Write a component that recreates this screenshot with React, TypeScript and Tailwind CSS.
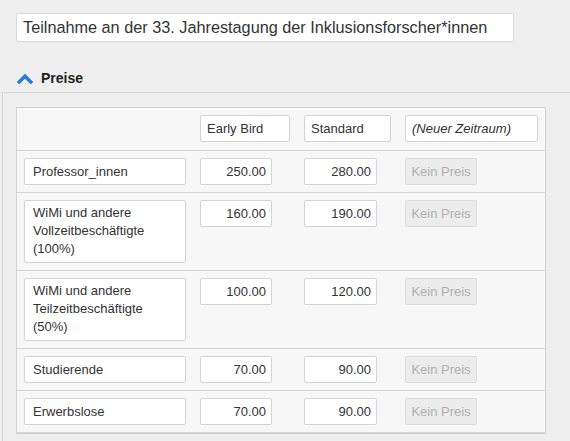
import React from "react";

const rows = [
  { name: ["Professor_innen"], eb: "250.00", st: "280.00" },
  { name: ["WiMi und andere", "Vollzeitbeschäftigte", "(100%)"], eb: "160.00", st: "190.00" },
  { name: ["WiMi und andere", "Teilzeitbeschäftigte", "(50%)"], eb: "100.00", st: "120.00" },
  { name: ["Studierende"], eb: "70.00", st: "90.00" },
  { name: ["Erwerbslose"], eb: "70.00", st: "90.00" },
];

function Box({ children, className = "" }: { children?: React.ReactNode; className?: string }) {
  return (
    <div className={`bg-white border border-[#d4d4d4] rounded-[2px] text-[13px] text-[#333] leading-[18px] ${className}`}>
      {children}
    </div>
  );
}

export default function App() {
  return (
    <div
      className="w-[570px] h-[441px] overflow-hidden bg-[#eeeeee]"
      style={{ fontFamily: '"Liberation Sans", Arial, sans-serif' }}
    >
      <div className="pt-[13px] pl-[16px]">
        <div className="w-[498px] h-[29px] bg-white border border-[#d8d8d8] rounded-[2px] flex items-center pl-[6px] text-[16.25px] text-[#333]">
          Teilnahme an der 33. Jahrestagung der Inklusionsforscher*innen
        </div>
      </div>
      <div className="h-[28px] mt-[22px] flex items-center pl-[17px] gap-[8px]">
        <svg width="16" height="11" viewBox="0 0 16 11">
          <path d="M2.2 9 L8 3.2 L13.8 9" fill="none" stroke="#2b7bcf" strokeWidth="3.4" strokeLinecap="square" />
        </svg>
        <span className="text-[14px] font-bold text-[#222]">Preise</span>
      </div>
      <div className="ml-[2px] border-t border-l border-[#d6d6d6] pt-[14px] pl-[13px] h-[400px]">
        <div className="w-[530px] border border-[#d2d2d2] bg-[#f7f7f7]">
          <div className="flex pt-[7px] pb-[8px] border-b border-[#d6d6d6]">
            <div className="w-[183px]" />
            <Box className="w-[90px] h-[27px] flex items-center pl-[6px]">Early Bird</Box>
            <div className="w-[14px]" />
            <Box className="w-[87px] h-[27px] flex items-center pl-[6px]">Standard</Box>
            <div className="w-[14px]" />
            <Box className="w-[133px] h-[27px] flex items-center pl-[6px] italic">(Neuer Zeitraum)</Box>
          </div>
          {rows.map((r, i) => (
            <div key={i} className="flex pt-[7px] pb-[7px] border-b border-[#d6d6d6]">
              <div className="w-[183px] pl-[7px]">
                <Box className={`w-[162px] pl-[8px] ${r.name.length > 1 ? "h-[63px] pt-[3px]" : "h-[27px] flex items-center"}`}>
                  {r.name.map((l, j) => (
                    <div key={j}>{l}</div>
                  ))}
                </Box>
              </div>
              <div className="w-[104px]">
                <Box className="w-[72px] h-[27px] flex items-center justify-end pr-[5px]">{r.eb}</Box>
              </div>
              <div className="w-[101px]">
                <Box className="w-[73px] h-[27px] flex items-center justify-end pr-[5px]">{r.st}</Box>
              </div>
              <div>
                <div className="w-[72px] h-[27px] flex items-center justify-center rounded-[2px] bg-[#ececec] border border-[#dcdcdc] text-[13px] text-[#b0b0b0]">
                  Kein Preis
                </div>
              </div>
            </div>
          ))}
        </div>
      </div>
    </div>
  );
}
